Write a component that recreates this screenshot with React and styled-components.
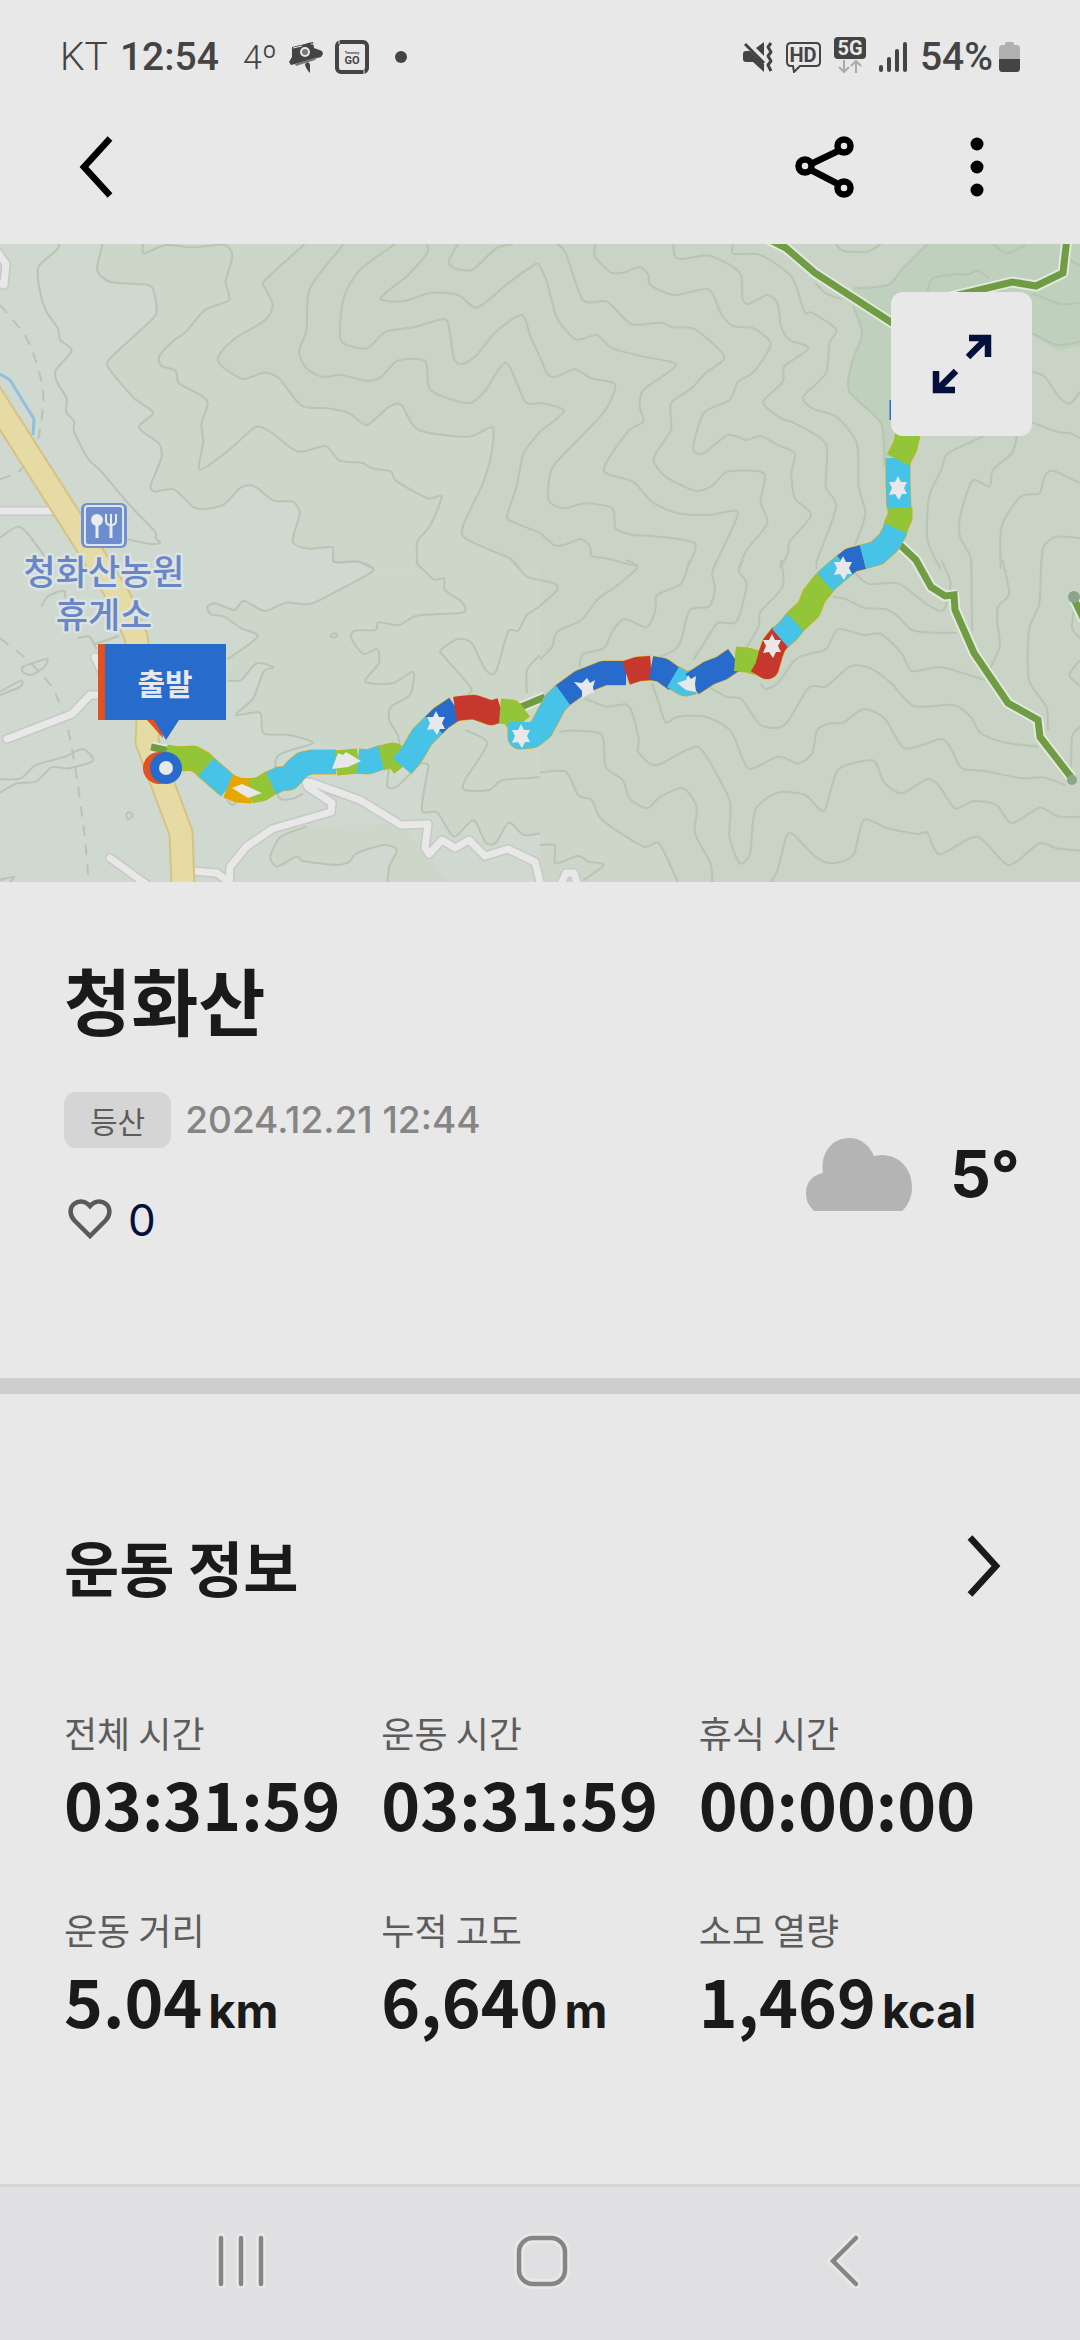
import React, {useState} from 'react';
import styled, {createGlobalStyle} from 'styled-components';

const GlobalStyle = createGlobalStyle`
    body {
        margin: 0;
        background: #e8e8e8;
        color: #1a1a1a;
        font-family: Inter, 'Noto Sans CJK KR', sans-serif;
    }

    * {
        box-sizing: border-box;
    }
`;

const Page = styled.div`
    display: flex;
    flex-direction: column;
    min-height: 100vh;
`;

// Phone status bar
const StatusBar = styled.div`
    display: flex;
    align-items: center;
    justify-content: space-between;
    height: 114px;
    padding: 0 60px;
    font-family: Roboto, sans-serif;
    line-height: 48px;
    color: #444;
`;

const StatusGroup = styled.div`
    display: flex;
    align-items: center;
    gap: ${props => props.$gap}px;
`;

const StatusText = styled.span`
    font-weight: ${props => props.$light ? 300 : 500};
    font-size: ${props => props.$small ? 34 : 39}px;
`;

const Header = styled.header`
    display: flex;
    align-items: center;
    height: 130px;
    padding: 0 55px 24px 48px;
    gap: 56px;
`;

const Spacer = styled.div`
    flex: 1;
`;

const IconButton = styled.button`
    display: flex;
    align-items: center;
    justify-content: center;
    width: ${props => props.$narrow ? 64 : 96}px;
    height: 96px;
    padding: 0;
    border: 0;
    background: none;
    color: ${props => props.$color || '#000'};
    cursor: pointer;
`;

const MapArea = styled.section`
    position: relative;
    height: 638px;
    overflow: hidden;
    background: #cfd9cf;
`;

const MapSvg = styled.svg`
    display: block;
    width: 100%;
    height: 100%;
    font-family: 'Noto Sans CJK KR', sans-serif;
`;

// Floats over the map
const ExpandButton = styled(IconButton)`
    position: absolute;
    top: 48px;
    right: 48px;
    width: 141px;
    height: 144px;
    border-radius: 12px;
    background: #e8e8e8;
`;

const Summary = styled.section`
    padding: 68px 60px 130px 64px;
    border-bottom: 16px solid #cecece;
`;

const Title = styled.h1`
    margin: 0;
    font-family: 'Noto Sans CJK KR', sans-serif;
    font-size: 73px;
    line-height: 96px;
    font-weight: 700;
`;

const SummaryRow = styled.div`
    display: flex;
    align-items: center;
    justify-content: space-between;
    padding-top: 46px;
`;

const Meta = styled.div`
    display: flex;
    align-items: center;
    gap: 14px;
    font-size: 37px;
    line-height: 56px;
    font-weight: 500;
    color: #858585;
`;

const Badge = styled.span`
    padding: 0 26px;
    border-radius: 12px;
    background: #d5d5d5;
    color: #5c5c5c;
    font-family: 'Noto Sans CJK KR', sans-serif;
    font-size: 30px;
    font-weight: 400;
`;

const LikeButton = styled.button`
    display: flex;
    align-items: center;
    gap: 16px;
    margin-top: 44px;
    padding: 0 4px;
    border: 0;
    background: none;
    color: #04103c;
    font-family: inherit;
    font-size: 44px;
    line-height: 56px;
    cursor: pointer;
`;

const Weather = styled.div`
    display: flex;
    align-items: center;
    gap: 38px;
    padding-top: 8px;
    font-size: 64px;
    line-height: 72px;
    font-weight: 700;
`;

const Workout = styled.section`
    flex: 1;
    padding: 124px 64px 80px;
`;

const WorkoutHeader = styled.div`
    display: flex;
    align-items: center;
    justify-content: space-between;
    margin-bottom: 90px;
`;

const WorkoutTitle = styled.h2`
    margin: 0;
    font-family: 'Noto Sans CJK KR', sans-serif;
    font-size: 60px;
    line-height: 96px;
    font-weight: 700;
`;

const StatGrid = styled.dl`
    display: grid;
    grid-template-columns: repeat(3, 1fr);
    row-gap: 57px;
    margin: 0;
    font-family: 'Noto Sans CJK KR', sans-serif;
`;

const StatLabel = styled.dt`
    font-size: 36px;
    line-height: 56px;
    color: #5c5c5c;
`;

const StatValue = styled.dd`
    margin: 0;
    font-size: 66px;
    line-height: 84px;
    font-weight: 700;
    white-space: nowrap;
`;

const Unit = styled.span`
    margin-left: 6px;
    font-family: Inter, sans-serif;
    font-size: 47px;
    line-height: 1;
`;

const NavBar = styled.nav`
    display: grid;
    grid-template-columns: repeat(3, 1fr);
    place-items: center;
    height: 156px;
    padding: 0 86px 6px 90px;
    border-top: 3px solid #d5d5d5;
    background: #e0e0e2;
`;

// Catmull-Rom curve through a "x,y x,y" list
const curve = text => {
    const p = text.trim().split(/\s+/).map(pair => pair.split(',').map(Number));
    let d = `M${p[0]}`;
    for(let i = 0; i < p.length - 1; i++) {
        const a = p[i - 1] || p[i];
        const b = p[i];
        const c = p[i + 1];
        const e = p[i + 2] || c;
        d += `C${b[0] + (c[0] - a[0]) / 8},${b[1] + (c[1] - a[1]) / 8} `
            + `${c[0] - (e[0] - b[0]) / 8},${c[1] - (e[1] - b[1]) / 8} ${c}`;
    }
    return d;
};

// The terrain comes in four tiles, each on its own 1568x990 grid
const TILES = [
    {
        x: 0,
        y: -4,
        areas: [
            ['#ccd6c9', '298,12 282,80 290,105 325,127 425,134 445,150 455,210 440,240 320,355 318,388 390,475 445,518 403,562 462,612 468,655 438,735 450,755 505,748 560,800 590,808 650,793 700,742 740,740 795,782 850,785 870,820 850,905 895,926 965,922 970,965 1040,965 1080,985 1568,990 1568,12'],
            ['#c9d3c6', '885,12 770,120 770,145 792,195 770,240 680,297 636,345 640,375 705,417 765,398 810,415 875,497 950,505 1015,520 1065,555 1130,500 1165,495 1215,570 1360,590 1430,562 1425,650 1400,735 1365,810 1345,890 1480,955 1510,990 1568,990 1568,12'],
        ],
        lines: [
            '298,12 282,80 290,105 325,127 425,134 445,150 455,210 440,240 320,355 318,388 390,475 445,518 403,562 462,612 468,655 438,735 450,755 505,748 560,800 590,808 650,793 700,742 740,740 795,782 850,785 870,820 850,905 895,926 965,922 970,965 1040,965 1080,985',
            '172,12 165,30 112,80 115,150 135,215 168,265 175,300 208,332 162,390 165,425 193,475 192,515 215,545 215,575 255,655 290,690 335,745 390,810 450,875 452,895 465,908 440,912 370,898',
            '415,12 418,40 480,15 560,22 650,14 672,35 672,65 655,125 665,180 595,210 540,275 500,305 462,350 470,378 510,392 520,430 590,470 603,495 585,550 590,605 580,690 665,630 740,562 780,572 865,635 945,618 985,662 1050,668 1080,685 1135,695 1150,722 1240,775 1282,770 1250,855 1212,905 1212,970',
            '885,12 770,120 770,145 792,195 770,240 680,297 636,345 640,375 705,417 765,398 810,415 875,497 950,505 1015,520 1065,555 1130,500 1165,495 1215,570 1360,590 1430,562 1425,650 1400,735 1365,810 1345,890 1480,955 1510,990',
            '998,12 900,145 890,270 868,335 890,385 935,410 990,405 1060,422 1105,412 1155,362 1235,363 1250,450 1360,490 1410,450 1470,368 1525,485 1568,488',
            '1568,575 1520,640 1500,740 1472,830 1500,850 1568,878',
            '1148,12 1050,85 1005,155 990,220 992,305 1065,325 1120,275 1200,262 1290,237 1305,270 1318,355 1340,372 1380,350 1440,275 1515,225 1540,290 1568,350',
            '1240,12 1240,40 1185,105 1105,175 1175,183 1250,158 1330,165 1385,203 1475,130 1555,72 1568,80',
            '1330,12 1303,65 1325,87 1375,87 1440,25 1490,12',
            '0,893 50,860 80,880 130,950',
        ],
        dashes: ['0,195 80,300 125,450 110,600 60,690 0,718'],
    },
    {
        x: 540,
        y: -4,
        areas: [
            ['#c9d3c6', '0,0 1568,0 1568,990 0,990'],
            ['#bfd0bc', '1125,12 1050,90 1010,135 910,145 890,160 910,200 935,280 905,370 898,455 990,550 1000,680 1080,660 1100,585 1430,285 1500,330 1568,320 1568,12'],
        ],
        lines: [
            '0,488 70,512 0,575',
            '0,350 20,400 48,410 100,388 150,415 218,433 190,510 110,600 35,685 25,780 70,805 130,790 210,805 220,865 270,885 325,888 450,910 425,990',
            '0,80 20,125 50,235 105,298 165,285 210,325 300,350 395,375 300,450 290,500 300,545 255,575 185,690 270,725 325,785 400,820 490,825 570,812 565,850 505,980',
            '0,878 40,915 70,915 118,897 145,920 150,948 190,955 285,980',
            '50,12 75,40 125,180 195,185 265,252 350,248 385,262 450,268 535,350 480,400 440,445 380,490 380,570 330,655 365,710 450,752 500,738 545,695 650,700 640,785 660,850 600,930 575,990',
            '160,12 160,50 205,97 240,98 290,82 315,105 320,135 390,165 490,148 525,220 560,258 620,265 670,310 640,370 610,405 575,425 550,480 475,520 445,625 475,640 545,585 600,600 640,588 690,615 740,640 730,700 740,775 787,825 725,905 720,940 695,985',
            '388,12 390,45 410,57 490,47 560,80 585,110 588,175 605,192 660,165 690,190 700,260 725,300 780,325 710,378 705,425 648,487 700,535 740,550 830,612 830,740 860,800 805,960 805,990',
            '560,12 562,42 640,45 730,110 768,215 790,218 860,268 840,310 830,400 765,470 790,505 860,530 920,610 925,740 945,820 915,915',
            '910,200 935,280 905,370 898,455 990,550 1000,680',
            '860,12 880,32 950,35 990,12',
            '1125,12 1050,90 1010,135 910,145',
            '800,130 830,160 875,178',
            '1125,155 1140,115 1200,103 1245,103 1270,92 1305,115',
            '1315,12 1355,40 1410,15',
            '1530,55 1568,78',
            '1430,160 1510,192 1568,188',
            '1430,280 1500,315 1568,305',
            '1430,395 1465,410 1510,475 1540,490 1568,455',
            '1430,548 1500,575 1540,580 1568,595',
            '1290,588 1185,640 1165,690 1130,770 1125,900 1165,990',
            '1385,588 1370,640 1315,690 1305,740 1255,722 1220,830 1220,890 1250,950 1252,990',
            '1568,730 1490,692 1465,710 1450,760 1395,770 1340,860 1338,990',
            '1568,895 1500,890 1462,920 1455,990',
        ],
        dashes: [],
    },
    {
        x: 0,
        y: 316,
        areas: [
            ['#ccd6c9', '1080,27 1083,32 970,98 900,132 830,128 768,153 708,122 680,150 625,130 602,140 612,163 650,170 700,205 748,230 660,298 660,362 700,360 745,310 793,322 765,335 735,415 685,465 755,458 765,520 840,525 908,550 1200,600 1245,615 1225,750 1270,758 1318,830 1375,780 1410,848 1440,848 1478,788 1520,825 1568,820 1568,27'],
            ['#ccd6c9', '1150,870 1115,855 1035,880 1015,905 975,915 880,903 860,890 805,920 785,890 815,830 890,800 1165,790 1300,966 1125,966 1130,920'],
        ],
        lines: [
            '965,0 980,8 1040,5 1083,32 970,98 900,132 830,128 768,153 708,122 680,150 625,130 602,140 612,163 650,170 700,205 748,230 660,298',
            '660,362 700,360 745,310 793,322 765,335 735,415 685,465 755,458 765,520 840,525 908,550 805,590 808,710 850,716 880,700',
            '1245,615 1225,750 1270,758 1318,830 1375,780 1410,848 1440,848 1478,788 1520,825 1568,820',
            '1245,615 1220,612 1155,678 1125,680 1130,620',
            '1212,0 1212,12 1260,58 1290,55 1292,90 1340,125 1345,157 1210,167 1160,195 1100,187 1090,210 1030,212 1020,235 1055,282 1095,267 1100,310 1060,365 1140,370 1200,335 1190,405 1135,440 1130,480 1155,525 1160,555',
            '1485,0 1530,50 1568,60',
            '960,225 975,220 980,230 962,232 960,225',
            '1350,410 1368,385 1290,290 1280,270 1330,237 1370,250 1410,330 1440,335 1475,215 1505,212 1530,165 1568,140',
            '1568,285 1530,330 1530,400',
            '1350,510 1415,550 1350,660 1350,690 1420,690 1460,660 1568,652',
            '1125,966 1130,920 1152,870 1115,855 1035,880 1015,905 975,915 880,903 860,890 805,920 785,890 815,830 890,800',
            '660,720 675,735 700,715',
            '0,658 60,655 105,615 190,590 240,567 270,602 200,625 150,622 105,665 50,670 0,698',
            '65,320 135,297 130,320 90,345 65,335 65,320',
            '0,395 60,362 60,380 0,405',
            '120,140 140,108 185,92 190,115',
            '225,235 260,230 280,268',
            '275,252 345,228',
            '365,765 375,755 385,768 373,778 365,765',
            '0,960 40,950 30,966',
        ],
        dashes: ['0,235 80,300 150,380 190,480 215,600 245,820 257,966'],
    },
    {
        x: 540,
        y: 316,
        areas: [
            ['#c9d3c6', '0,27 1568,27 1568,990 400,990 345,850 300,860 180,780 150,720 110,705 75,635 0,638'],
            ['#ccd6c9', '0,638 75,635 110,705 150,720 180,780 300,860 345,850 400,966 0,966'],
        ],
        lines: [
            '0,60 40,70 50,90 0,138',
            '250,0 283,22 220,80 170,115 120,180 50,215 35,260 0,298',
            '435,0 410,70 340,105 335,150 310,202 245,177 210,215 185,265 125,282 115,320',
            '515,0 500,40 508,90 490,140 435,150 410,240 390,270 350,290',
            '590,0 578,35 600,75 570,185 515,190 470,260 445,300',
            '700,0 705,80 640,155 635,200 600,262',
            '850,110 890,118 940,143 1005,148 1040,170 1080,210 1140,218 1210,218',
            '915,40 955,72 1040,70 1120,130 1170,152 1192,70 1165,0',
            '640,370 655,387 690,370 740,300 780,282 830,268 860,212 880,208 940,225 990,222 1050,280 1080,333 1165,322 1290,360',
            '490,380 540,410 585,418 640,495 710,495 780,383 830,380 900,320 960,325 1020,370 1085,438 1200,435 1250,470 1280,520 1350,548 1445,560',
            '325,370 345,430 365,487 400,470 480,470 555,515 605,625 690,590 750,610 790,580 805,510 845,490 880,488 940,447 1000,475 1060,565 1165,537 1195,570 1225,625 1290,633 1400,655 1460,652 1525,675',
            '130,415 195,440 250,433 270,465 287,540 285,575 320,612 350,612 430,568 470,570 550,720 550,830 580,910 610,880 625,750 690,698 770,705 825,752 865,630 960,600 980,620 1000,668 1050,700 1125,657 1160,680 1205,745 1260,723 1325,735 1370,790 1450,743 1505,770 1568,770',
            '55,515 100,512 180,525 190,620 240,660 260,715 310,745 350,710 415,685 455,740 450,820 495,910 500,966',
            '0,638 75,635 110,705 150,720 180,780 300,860 345,850 400,966',
            '670,966 690,930 715,830 735,823 800,890 850,910 910,885 940,780 1010,805 1095,822 1125,818 1160,883 1270,830 1360,915 1450,850 1500,865 1568,872',
            '0,855 43,857 45,910 110,887 140,905 185,915 125,962',
            '1252,0 1255,215',
            '1343,0 1362,100 1330,140 1328,190 1335,260 1305,330 1308,350',
            '1455,0 1450,130 1420,210 1420,360 1470,440 1475,510',
            '1568,500 1545,530 1542,620',
            '1550,150 1545,205 1568,235',
            '1568,300 1537,345 1568,378',
        ],
        dashes: [],
    },
];

const ROADS = [
    '-4,6 6,20 4,41 -4,38',
    '0,267 54,267',
    '7,495 72,470 90,451 104,451',
    '95,413 102,428',
    '110,614 150,643',
    '193,627 217,629 229,638',
    '229,642 230,623 246,603 272,585 331,568 332,559 308,543 306,538',
    '310,538 360,556 401,581 428,580 425,604 429,610 442,596 455,604 469,596 485,612 508,605 535,618 541,642',
    '561,640 566,629 574,629 577,640',
];

const TRAILS = [
    '766,-6 786,4 815,29 900,84',
    '1067,-6 1063,29 1036,42 1012,38 950,53',
    '898,299 916,316 931,343 945,352 954,351 955,366 974,409 1008,459 1038,476 1040,493 1071,533',
    '516,465 545,453',
    '151,503 179,509',
    '1074,355 1084,376',
];

const GREEN = '#93c538';
const CYAN = '#48c3e8';
const BLUE = '#276bcd';
const RED = '#c6382e';
const AMBER = '#e6a800';

// Track coloured by pace
const TRACK = [
    [GREEN, '166,513 180,515 193,514 202,519 208,525'],
    [CYAN, '206,523 229,543'],
    [AMBER, '228,542 238,546 252,547'],
    [GREEN, '250,547 261,545 272,538'],
    [CYAN, '271,539 280,535 289,534 297,525 303,520 312,518 336,518'],
    [GREEN, '336,519 358,517'],
    [CYAN, '358,517 368,518 383,513'],
    [GREEN, '381,514 393,511 398,514 404,522'],
    [CYAN, '402,522 412,510 422,493 436,479'],
    [BLUE, '434,481 441,474 456,464'],
    [RED, '455,465 462,464 474,463 483,466 491,469 501,466'],
    [GREEN, '500,467 511,468 520,480'],
    [CYAN, '520,478 520,493 532,492 541,485 547,474 555,459 565,449'],
    [BLUE, '563,451 581,438 604,429 626,429'],
    [RED, '626,429 638,425 651,424'],
    [BLUE, '651,424 662,426 676,436'],
    [CYAN, '673,433 685,440 694,438'],
    [BLUE, '692,440 709,429 722,424 735,415'],
    [GREEN, '735,415 747,416 758,419'],
    [RED, '757,417 767,423 771,409 774,401 782,391'],
    [CYAN, '780,394 788,387 796,377'],
    [GREEN, '795,378 809,365 814,352 826,337'],
    [CYAN, '825,338 834,330 847,319'],
    [BLUE, '845,321 851,316 863,313'],
    [CYAN, '863,313 877,309 889,298 895,287 896,282'],
    [GREEN, '895,284 900,273 900,263'],
    [CYAN, '899,264 898,238 898,214'],
    [GREEN, '898,216 905,203 908,190 908,170'],
];

const STARS = [
    [898, 244], [843, 324], [772, 402], [436, 479], [521, 492],
];

const StatusCamera = () => (
    <svg width="34" height="31" viewBox="0 0 34 31" fill="#444">
        <path d="M3 5l13-3 3-1 5-1 1 6 8 3 1 3-2 3-26 7-4 1-2-3 3-5z"/>
        <path d="M4 6l9-2M22 2l3 0" stroke="#e8e8e8"/>
        <path d="M6 22l22-7-2 3-19 6z" fill="#777"/>
        <circle cx="16" cy="10" r="5" fill="#e8e8e8"/>
        <circle cx="16" cy="10" r="3" fill="#777"/>
        <path d="M16 22q4-4 5 1l0 8q-5-5-5-9z"/>
    </svg>
);

const StatusGo = () => (
    <svg width="34" height="34" viewBox="0 0 34 34">
        <rect x="2" y="2" width="30" height="30" rx="4" fill="none" stroke="#444" strokeWidth="4"/>
        <path d="M4 0v4M29 30v4" stroke="#e8e8e8"/>
        <text x="17" y="14" textAnchor="middle" fontSize="4" fontWeight="700" fill="#444">Tmoney</text>
        <text x="17" y="24" textAnchor="middle" fontSize="11" fontWeight="700" fill="#444">GO</text>
    </svg>
);

const StatusMute = () => (
    <svg width="30" height="30" viewBox="0 0 30 30" fill="#444">
        <path d="M0 12q0-3 3-3h4l14 13v8L10 20H3q-3 0-3-3z"/>
        <path d="M21 0v14l-8-8z"/>
        <path d="M2 2l19 19" stroke="#444" strokeWidth="3"/>
        <path d="M28 1l-3 4 3 5-3 4 3 5-3 4 3 6" fill="none" stroke="#444" strokeWidth="3" strokeLinejoin="round"/>
    </svg>
);

const StatusHd = () => (
    <svg width="35" height="31" viewBox="0 0 35 31">
        <path
            d="M5 1h25q4 0 4 4v15q0 4-4 4H14l-6 6-1-6H5q-4 0-4-4V5q0-4 4-4z"
            fill="none"
            stroke="#444"
            strokeWidth="2"
        />
        <text x="17" y="20" textAnchor="middle" fontSize="20" fontWeight="700" fill="#444">HD</text>
    </svg>
);

const Status5g = () => (
    <svg width="32" height="40" viewBox="0 0 32 40">
        <rect width="32" height="22" rx="4" fill="#444"/>
        <text x="16" y="18" textAnchor="middle" fontSize="20" fontWeight="700" fill="#e8e8e8">5G</text>
        <path d="M10 23v12M5 30l5 5 5-5M22 36V24M17 29l5-5 5 5" fill="none" stroke="#aaa" strokeWidth="2"/>
    </svg>
);

const StatusSignal = () => (
    <svg width="28" height="30" viewBox="0 0 28 30">
        <path
            d="M2 25v3M10 17v11M18 9v19M26 2v26"
            stroke="#444"
            strokeWidth="4"
            strokeLinecap="round"
        />
    </svg>
);

const StatusBattery = () => (
    <svg width="21" height="30" viewBox="0 0 21 30">
        <path d="M6 2q0-2 2-2h5q2 0 2 2v1h3q3 0 3 4v10H0V7q0-4 3-4h3z" fill="#b0b0b0"/>
        <path d="M0 17h21v9q0 4-3 4H3q-3 0-3-4z" fill="#444"/>
    </svg>
);

const Chevron = ({right}) => (
    <svg width="34" height="62" viewBox="0 0 34 62" fill="none" stroke="currentColor" strokeWidth="6.5">
        <path d={right ? 'M3 2.5L29 31L3 59.5' : 'M31 2.5L5 31L31 59.5'}/>
    </svg>
);

const TrailMap = () => (
    <MapSvg viewBox="0 0 1080 638" preserveAspectRatio="xMidYMid slice" role="img" aria-label="청화산 경로">
        {TILES.map(tile => (
            <g
                key={`${tile.x},${tile.y}`}
                transform={`translate(${tile.x} ${tile.y}) scale(.3444 .3333)`}
                fill="none"
                stroke="#b9c5b4"
                strokeWidth="6">
                {tile.areas.map(([color, points], i) => (
                    <polygon key={i} points={points} fill={color} stroke="none"/>
                ))}
                {tile.lines.map((points, i) => <path key={i} d={curve(points)}/>)}
                {tile.dashes.map((points, i) => <path key={i} d={curve(points)} strokeDasharray="32 26"/>)}
            </g>
        ))}
        <g fill="none" strokeLinejoin="round">
            {/* Stream and highway */}
            <polyline points="0,130 10,136 34,175 33,191" stroke="#91bfdf" strokeWidth="3"/>
            {ROADS.map(points => (
                <polyline key={points} points={points} stroke="#c6c9c6" strokeWidth="10" strokeLinecap="round"/>
            ))}
            {ROADS.map(points => (
                <polyline key={points} points={points} stroke="#e8e8e8" strokeWidth="7" strokeLinecap="round"/>
            ))}
            {[['#d6c283', 25], ['#e6dba5', 21]].map(([color, width]) => (
                <polyline
                    key={color}
                    points="-20,133 90,306 119,353 136,393 148,476 147,498 160,533 181,589 183,642"
                    stroke={color}
                    strokeWidth={width}
                />
            ))}
            {TRAILS.map(points => (
                <polyline key={points} points={points} stroke="#e3e9de" strokeWidth="11"/>
            ))}
            {TRAILS.map(points => (
                <polyline key={points} points={points} stroke="#709d44" strokeWidth="7" strokeLinejoin="miter"/>
            ))}
        </g>
        <circle cx="1072" cy="536" r="5" fill="#8ba587"/>
        <circle cx="1074" cy="353" r="6" fill="#8ba587"/>

        {/* Rest area */}
        <rect x="81" y="259" width="46" height="45" rx="6" fill="#7291d2"/>
        <rect x="85" y="262" width="38" height="39" rx="3" fill="#6e8dcf" stroke="#dfe5ef" strokeWidth="2"/>
        <g stroke="#e8ecee" strokeWidth="3" fill="none">
            <circle cx="97" cy="276" r="5" fill="#e8ecee" strokeWidth="2"/>
            <path d="M97 276v18M111 280v14"/>
            <path d="M106 270v7q0 4 5 4t5-4v-7M111 270v11" strokeWidth="2"/>
        </g>
        <text
            fill="#6a86c5"
            stroke="#dbe3e3"
            strokeWidth="5"
            strokeLinejoin="round"
            paintOrder="stroke"
            fontSize="35"
            fontWeight="500"
            textAnchor="middle">
            <tspan x="104" y="341">청화산농원</tspan>
            <tspan x="104" y="384">휴게소</tspan>
        </text>

        <path d="M891 156v20" stroke={BLUE} strokeWidth="3"/>
        <g fill="none" strokeWidth="24" strokeLinejoin="round">
            {TRACK.map(([, points]) => (
                <polyline key={points} points={points} stroke={AMBER} strokeWidth="25"/>
            ))}
            {TRACK.map(([color, points]) => (
                <polyline key={points} points={points} stroke={color}/>
            ))}
        </g>
        <g fill="#e8e8e8">
            {STARS.map(([x, y]) => (
                <path
                    key={x}
                    transform={`translate(${x} ${y})`}
                    d="M0-12L3-6L9-6L6 0L9 6L4 6L1 12L-3 6L-9 7L-6 0L-9-6L-3-6z"
                />
            ))}
            <path d="M574 438l8 1 5-5 3 5 5-3-2 7 1 6-5 1-7 4 0-7z"/>
            <path d="M677 439l9-3 2-5 3 4 5-3-1 8 1 8-6-1-4-1z"/>
            <path d="M232 544l10-4 20 9-14 5z"/>
            <path d="M332 525l6-16 5 2 3-3 15 9-13 6z"/>
        </g>

        {/* Start pin */}
        <circle cx="159" cy="524" r="16" fill="#e2511f"/>
        <circle cx="166" cy="524" r="16" fill={BLUE}/>
        <circle cx="166" cy="524" r="7" fill="#e8e8e8"/>
        <path d="M147 476h14l2 18z" fill="#e2511f"/>
        <path d="M154 476h25l-13 20z" fill={BLUE}/>
        <rect x="98" y="400" width="128" height="76" fill="#e2511f"/>
        <rect x="105" y="400" width="121" height="76" fill={BLUE}/>
        <text x="165" y="451" textAnchor="middle" fontSize="30" fontWeight="700" fill="#e8e8e8">출발</text>
    </MapSvg>
);

const STATS = [
    {label: '전체 시간', value: '03:31:59'},
    {label: '운동 시간', value: '03:31:59'},
    {label: '휴식 시간', value: '00:00:00'},
    {label: '운동 거리', value: '5.04', unit: 'km'},
    {label: '누적 고도', value: '6,640', unit: 'm'},
    {label: '소모 열량', value: '1,469', unit: 'kcal'},
];

export default function App() {
    const [liked, setLiked] = useState(false);

    return (
        <Page>
            <GlobalStyle/>
            <StatusBar>
                <StatusGroup $gap={24}>
                    <StatusGroup $gap={12}>
                        <StatusText $light>KT</StatusText>
                        <StatusText>12:54</StatusText>
                    </StatusGroup>
                    <StatusGroup $gap={12}>
                        <StatusText $light $small>4º</StatusText>
                        <StatusCamera/>
                        <StatusGo/>
                        <svg width="40" height="14" viewBox="0 0 40 14">
                            <circle cx="20" cy="7" r="6" fill="#444"/>
                        </svg>
                    </StatusGroup>
                </StatusGroup>
                <StatusGroup $gap={13}>
                    <StatusMute/>
                    <StatusHd/>
                    <Status5g/>
                    <StatusSignal/>
                    <StatusGroup $gap={6}>
                        <StatusText>54%</StatusText>
                        <StatusBattery/>
                    </StatusGroup>
                </StatusGroup>
            </StatusBar>

            <Header>
                <IconButton aria-label="뒤로">
                    <Chevron/>
                </IconButton>
                <Spacer/>
                <IconButton aria-label="공유">
                    <svg width="60" height="62" viewBox="0 0 60 62" fill="none" stroke="currentColor" strokeWidth="6.5">
                        <path d="M16 28l27-13M16 34l27 14"/>
                        <circle cx="49" cy="10" r="6.5"/>
                        <circle cx="10" cy="30" r="6.5"/>
                        <circle cx="49" cy="52" r="6.5"/>
                    </svg>
                </IconButton>
                <IconButton aria-label="더보기">
                    <svg width="14" height="60" viewBox="0 0 14 60" fill="currentColor">
                        <circle cx="7" cy="7" r="6.5"/>
                        <circle cx="7" cy="30" r="6.5"/>
                        <circle cx="7" cy="53" r="6.5"/>
                    </svg>
                </IconButton>
            </Header>

            <MapArea>
                <TrailMap/>
                <ExpandButton aria-label="지도 확대" $color="#04103c">
                    <svg width="60" height="60" viewBox="0 0 60 60" fill="none" stroke="currentColor" strokeWidth="6.5">
                        <path d="M36 23L55 4M37 4h19v19"/>
                        <path d="M24 37L5 56M4 37v19h19"/>
                    </svg>
                </ExpandButton>
            </MapArea>

            <Summary>
                <Title>청화산</Title>
                <SummaryRow>
                    <div>
                        <Meta>
                            <Badge>등산</Badge>
                            <time dateTime="2024-12-21T12:44">2024.12.21 12:44</time>
                        </Meta>
                        <LikeButton
                            aria-label="좋아요"
                            aria-pressed={liked}
                            onClick={() => setLiked(!liked)}>
                            <svg width="44" height="42" viewBox="0 0 44 42" fill="none" stroke="#5a5a5a" strokeWidth="4.5">
                                <path d="M22 37L6 21C1 15 2 8 6 5C11 1 18 2 22 7C26 2 33 1 38 5C42 8 43 15 38 21z"/>
                            </svg>
                            {liked ? 1 : 0}
                        </LikeButton>
                    </div>
                    <Weather>
                        <svg width="106" height="73" viewBox="0 0 106 73" fill="#b4b4b4">
                            <path d="M8 73C3 68 0 63 0 55C0 44 7 37 17 35C14 15 26 0 43 0C55 0 63 7 68 18C89 13 106 28 106 49C106 59 102 68 96 73z"/>
                        </svg>
                        5°
                    </Weather>
                </SummaryRow>
            </Summary>

            <Workout>
                <WorkoutHeader>
                    <WorkoutTitle>운동 정보</WorkoutTitle>
                    <IconButton aria-label="운동 정보 더보기" $color="#1a1a1a" $narrow>
                        <Chevron right/>
                    </IconButton>
                </WorkoutHeader>
                <StatGrid>
                    {STATS.map(stat => (
                        <div key={stat.label}>
                            <StatLabel>{stat.label}</StatLabel>
                            <StatValue>
                                {stat.value}
                                {stat.unit && <Unit>{stat.unit}</Unit>}
                            </StatValue>
                        </div>
                    ))}
                </StatGrid>
            </Workout>

            <NavBar>
                <IconButton aria-label="최근 앱" $color="#858585">
                    <svg width="52" height="60" viewBox="0 0 52 60" strokeLinecap="round">
                        <path d="M6 7v46M26 7v46M46 7v46" stroke="#e8e8e8" strokeWidth="10"/>
                        <path d="M6 7v46M26 7v46M46 7v46" stroke="currentColor" strokeWidth="4.5"/>
                    </svg>
                </IconButton>
                <IconButton aria-label="홈" $color="#858585">
                    <svg width="58" height="58" viewBox="0 0 58 58" fill="none">
                        <rect x="6" y="6" width="46" height="46" rx="14" stroke="#e8e8e8" strokeWidth="10"/>
                        <rect x="6" y="6" width="46" height="46" rx="14" stroke="currentColor" strokeWidth="4.5"/>
                    </svg>
                </IconButton>
                <IconButton aria-label="이전" $color="#858585">
                    <svg width="36" height="60" viewBox="0 0 36 60" fill="none" strokeLinecap="round">
                        <path d="M31 7L8 30L31 53" stroke="#e8e8e8" strokeWidth="10"/>
                        <path d="M31 7L8 30L31 53" stroke="currentColor" strokeWidth="4.5"/>
                    </svg>
                </IconButton>
            </NavBar>
        </Page>
    );
}
